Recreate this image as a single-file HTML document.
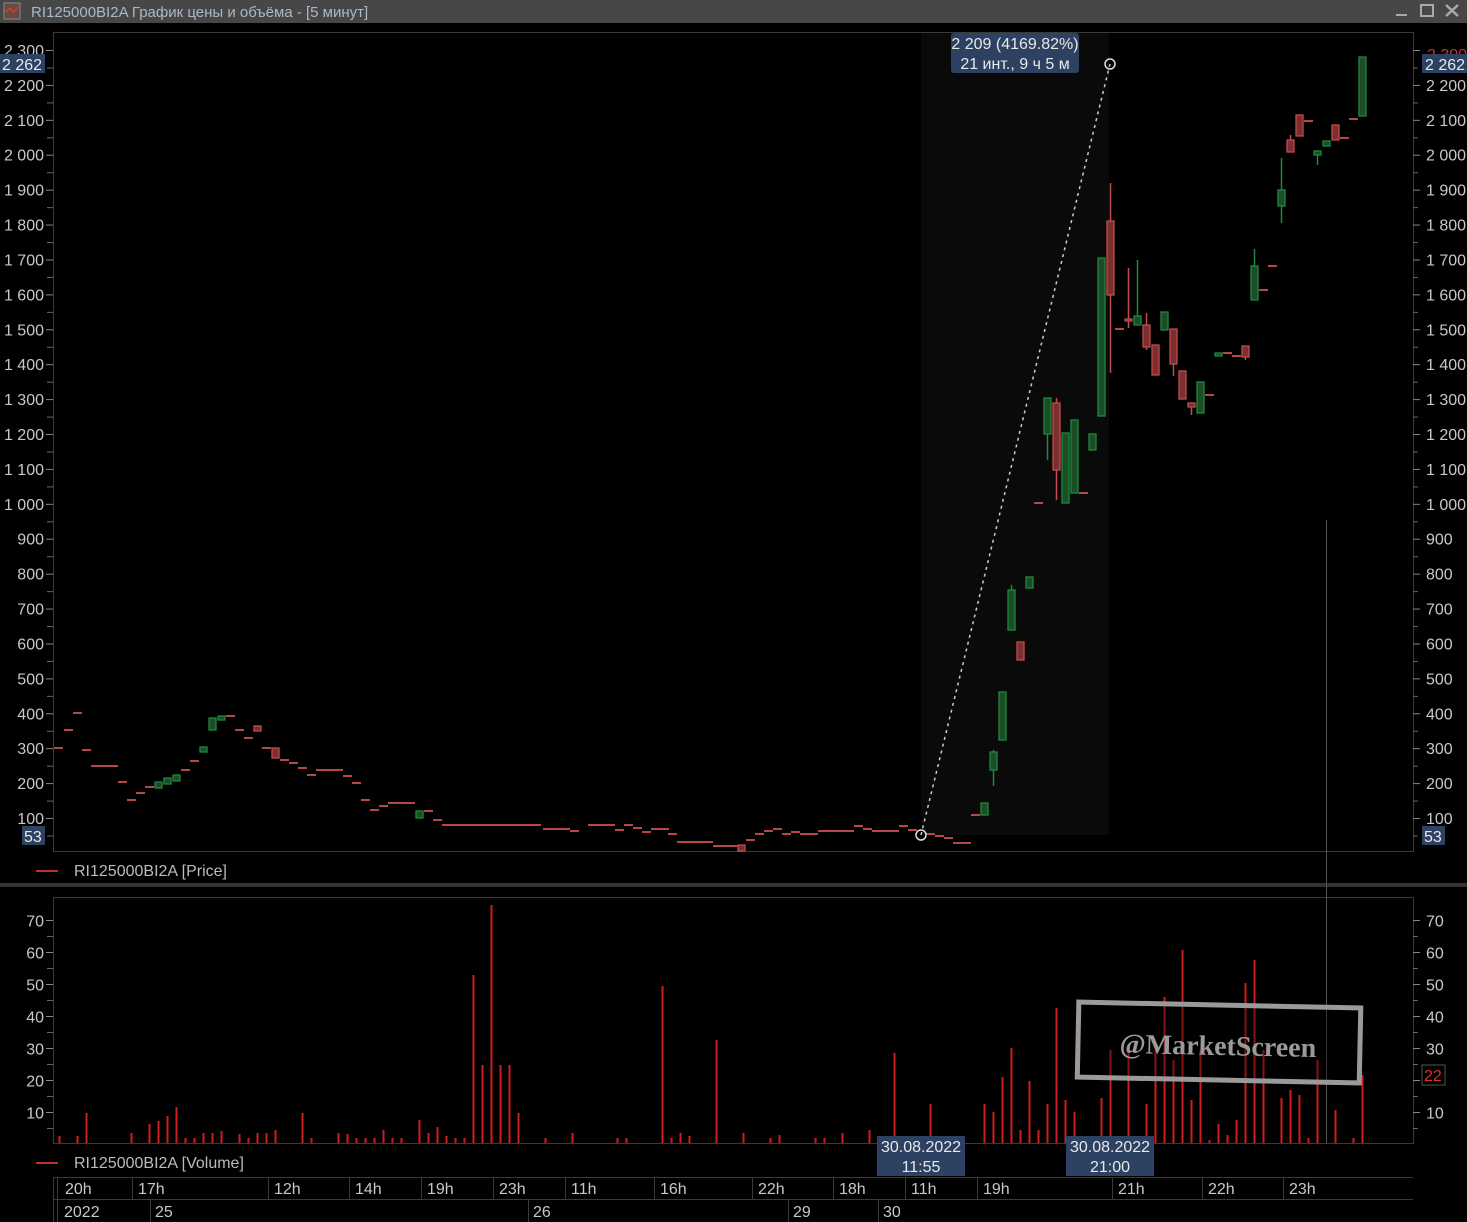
<!DOCTYPE html>
<html><head><meta charset="utf-8">
<style>
html,body{margin:0;padding:0;background:#000;width:1467px;height:1222px;overflow:hidden;font-family:"Liberation Sans","DejaVu Sans",sans-serif}
svg text{font-family:"Liberation Sans","DejaVu Sans",sans-serif}
</style></head><body>
<svg id="s" width="1467" height="1222" xmlns="http://www.w3.org/2000/svg">
<rect x="0" y="0" width="1467" height="1222" fill="#000"/>
<rect x="0" y="0" width="1467" height="23" fill="#474747"/>
<rect x="4" y="3" width="16" height="16" fill="#6a4a40" stroke="#888" stroke-width="1"/>
<polyline points="6,12 10,8 13,12 18,7" fill="none" stroke="#d04030" stroke-width="1.5"/>
<text x="31" y="17" font-size="15" fill="#a9b9c9">RI125000BI2A График цены и объёма - [5 минут]</text>
<rect x="1396" y="14" width="11" height="2" fill="#aaa"/>
<rect x="1421" y="5" width="12" height="11" fill="none" stroke="#aaa" stroke-width="2"/>
<path d="M1446 5 L1458 16 M1458 5 L1446 16" stroke="#aaa" stroke-width="2.5"/>
<rect x="921" y="33" width="188" height="802" fill="#0a0a0a"/>
<rect x="53.5" y="32.5" width="1360" height="819" fill="none" stroke="#3a3a3a"/>
<g id="pl" font-size="16" fill="#c8c8c8"></g>
<g id="candles"></g>
<line x1="921" y1="835" x2="1110" y2="64" stroke="#ccc" stroke-width="1.5" stroke-dasharray="3,4"/>
<circle cx="921" cy="835" r="5" fill="none" stroke="#ddd" stroke-width="1.5"/>
<circle cx="1110" cy="64" r="5" fill="none" stroke="#ddd" stroke-width="1.5"/>
<rect x="951" y="33" width="128" height="40" rx="3" fill="#2d4262"/>
<text x="1015" y="49" font-size="16" fill="#e8e8e8" text-anchor="middle">2 209 (4169.82%)</text>
<text x="1015" y="69" font-size="16" fill="#e8e8e8" text-anchor="middle">21 инт., 9 ч 5 м</text>
<rect x="0" y="54" width="45" height="19" fill="#2d4262"/>
<text x="2" y="70" font-size="16" fill="#e8e8e8">2 262</text>
<rect x="22" y="826" width="23" height="19" fill="#2d4262"/>
<text x="24" y="842" font-size="16" fill="#e8e8e8">53</text>
<text x="1427" y="60" font-size="16" fill="#d03030">2 300</text>
<rect x="1422" y="54" width="45" height="19" fill="#2d4262"/>
<text x="1425" y="70" font-size="16" fill="#e8e8e8">2 262</text>
<rect x="1422" y="826" width="23" height="19" fill="#2d4262"/>
<text x="1424" y="842" font-size="16" fill="#e8e8e8">53</text>
<line x1="36" y1="871" x2="58" y2="871" stroke="#c03030" stroke-width="2"/>
<text x="74" y="876" font-size="16" fill="#bbb">RI125000BI2A [Price]</text>
<rect x="0" y="883" width="1467" height="4" fill="#333"/>
<rect x="53.5" y="897.5" width="1360" height="246" fill="none" stroke="#3a3a3a"/>
<g id="vl" font-size="16" fill="#c8c8c8"></g>
<g id="vols"></g>
<line x1="1326.5" y1="520" x2="1326.5" y2="1143" stroke="#555" stroke-width="1"/>
<rect x="1422" y="1065" width="23" height="20" fill="#000" stroke="#555"/>
<text x="1424" y="1081" font-size="16" fill="#e03030">22</text>
<g transform="rotate(1.2 1218 1044)">
<rect x="1078" y="1005" width="282" height="75" fill="rgba(0,0,0,0.35)" stroke="#9a9a9a" stroke-width="5"/>
<text x="1218" y="1055" font-size="28" font-weight="bold" fill="#9a9a9a" text-anchor="middle" style="font-family:'Liberation Serif',serif">@MarketScreen</text>
</g>
<rect x="877" y="1136" width="88" height="40" fill="#2d4262"/>
<text x="921" y="1152" font-size="16" fill="#e8e8e8" text-anchor="middle">30.08.2022</text>
<text x="921" y="1172" font-size="16" fill="#e8e8e8" text-anchor="middle">11:55</text>
<rect x="1066" y="1136" width="88" height="40" fill="#2d4262"/>
<text x="1110" y="1152" font-size="16" fill="#e8e8e8" text-anchor="middle">30.08.2022</text>
<text x="1110" y="1172" font-size="16" fill="#e8e8e8" text-anchor="middle">21:00</text>
<line x1="36" y1="1163" x2="58" y2="1163" stroke="#c03030" stroke-width="2"/>
<text x="74" y="1168" font-size="16" fill="#bbb">RI125000BI2A [Volume]</text>
<g stroke="#3a3a3a" fill="none">
<line x1="53" y1="1177.5" x2="1413" y2="1177.5"/>
<line x1="53" y1="1199.5" x2="1413" y2="1199.5"/>
<line x1="53.5" y1="1177" x2="53.5" y2="1222"/>
<line x1="57.5" y1="1177" x2="57.5" y2="1222"/>
</g>
<g id="tx" font-size="16" fill="#c8c8c8"></g>
</svg>
<script>
var NS="http://www.w3.org/2000/svg";
function el(p,t,a,txt){var e=document.createElementNS(NS,t);for(var k in a)e.setAttribute(k,a[k]);if(txt!=null)e.textContent=txt;document.getElementById(p).appendChild(e);return e;}
var pv=[2300,2200,2100,2000,1900,1800,1700,1600,1500,1400,1300,1200,1100,1000,900,800,700,600,500,400,300,200,100];
function py(p){return 818-(p-100)*0.34909;}
pv.forEach(function(p){var y=py(p);var s=p>=1000?(Math.floor(p/1000)+" "+String(p%1000).padStart(3,"0")):String(p);
 el("pl","text",{x:44,y:y+6,"text-anchor":"end"},s);
 if(p!=2300)el("pl","text",{x:1426,y:y+6},s);
 el("pl","line",{x1:46,y1:y+.5,x2:53,y2:y+.5,stroke:"#888"});
 el("pl","line",{x1:1413,y1:y+.5,x2:1420,y2:y+.5,stroke:"#888"});
 el("pl","line",{x1:47,y1:y+17.5+.5,x2:53,y2:y+17.5+.5,stroke:"#666"});
 el("pl","line",{x1:1413,y1:y+17.5+.5,x2:1418,y2:y+17.5+.5,stroke:"#666"});
});
[70,60,50,40,30,20,10].forEach(function(v){var y=1144-v*3.2+0.5;
 el("vl","text",{x:44,y:y+6,"text-anchor":"end"},String(v));
 if(v!=20)el("vl","text",{x:1426,y:y+6},String(v));
 el("vl","line",{x1:46,y1:y,x2:53,y2:y,stroke:"#888"});
 el("vl","line",{x1:1413,y1:y,x2:1420,y2:y,stroke:"#888"});
 el("vl","line",{x1:47,y1:y+16,x2:53,y2:y+16,stroke:"#666"});
 el("vl","line",{x1:1413,y1:y+16,x2:1418,y2:y+16,stroke:"#666"});
});
var D=[[58,748],[68,730],[77,713],[86,750],[95,766],[104,766],[113,766],[122,782],[131,800],[140,793],[149,787],[185,770],[194,761],[230,716],[239,730],[248,738],[266,748],[284,760],[293,763],[302,768],[311,775],[320,770],[329,770],[338,770],[347,776],[356,783],[365,800],[374,810],[383,806],[392,803],[401,803],[410,803],[428,811],[437,820]];
for(var x=446;x<=538;x+=9)D.push([x,825]);
D=D.concat([[547,829],[556,829],[565,829],[574,831],[592,825],[601,825],[610,825],[619,830],[628,825],[637,828],[646,832],[655,829],[664,829],[672,834],[681,842],[690,842],[699,842],[708,842],[717,846],[726,846],[735,846],[750,840],[759,834],[768,831],[777,829],[786,834],[795,832],[804,834],[813,834],[822,831],[831,831],[840,831],[849,831],[858,826],[867,829],[876,831],[885,831],[894,831],[903,826],[912,830],[930,834],[939,836],[948,838],[957,843],[966,843],[975,815],[1038,503],[1083,493],[1119,329],[1209,395],[1227,353],[1236,356],[1263,290],[1272,266],[1308,121],[1344,138],[1353,119]]);
D.forEach(function(d){el("candles","rect",{x:d[0]-4,y:d[1]-1,width:9,height:2,fill:"#b84848"});});
var C=[[158,782,788,"g"],[167,778,784,"g"],[176,775,781,"g"],[203,747,752,"g"],[212,718,730,"g"],[221,716,720,"g"],[257,726,731,"r"],[275,748,758,"r"],[419,811,818,"g"],[741,845,851,"r"],
[984,803,815,"g"],[993,752,770,"g",750,786],[1002,692,740,"g"],[1011,590,630,"g",585,630],[1020,642,660,"r"],[1029,577,588,"g"],[1047,398,434,"g",398,460],[1056,403,470,"r",398,500],[1065,433,503,"g"],[1074,420,493,"g"],[1092,434,450,"g"],[1101,258,416,"g"],[1110,221,295,"r",183,373],[1128,319,321,"r",268,328],[1137,316,325,"g",260,325],[1146,325,347,"r",313,350],[1155,345,375,"r"],[1164,312,330,"g"],[1173,329,364,"r",329,376],[1182,371,399,"r"],[1191,403,407,"r",403,415],[1200,382,413,"g"],[1218,353,356,"g"],[1245,346,357,"r",346,360],[1254,266,300,"g",249,300],[1281,190,206,"g",158,223],[1290,140,152,"r",135,152],[1299,115,136,"r"],[1317,151,155,"g",151,165],[1326,141,146,"g"],[1335,125,140,"r"],[1362,57,116,"g"]];
C.forEach(function(c){var g=c[3]=="g";var st=g?"#1d8a3c":"#c04c4c",fi=g?"#1c4d27":"#7d2e2e";
 if(c[4]!=null)el("candles","line",{x1:c[0]+.5,y1:c[4],x2:c[0]+.5,y2:c[5],stroke:st,"stroke-width":1.5});
 el("candles","rect",{x:c[0]-3,y:c[1],width:7,height:Math.max(2,c[2]-c[1]),fill:fi,stroke:st,"stroke-width":1.3});});
var V=[[59,1136],[77,1136],[86,1113],[131,1133],[149,1124],[158,1121],[167,1116],[176,1107],[185,1138],[194,1138],[203,1133],[212,1133],[221,1131],[239,1134],[248,1138],[257,1133],[266,1133],[275,1130],[302,1113],[311,1138],[338,1133],[347,1134],[356,1138],[365,1138],[374,1138],[383,1130],[392,1138],[401,1138],[419,1120],[428,1133],[437,1127],[446,1136],[455,1138],[464,1138],[473,975],[482,1065],[491,905],[500,1065],[509,1065],[518,1113],[545,1138],[572,1133],[617,1138],[626,1138],[662,986],[671,1138],[680,1133],[689,1136],[716,1040],[743,1133],[770,1138],[779,1135],[815,1138],[824,1138],[842,1133],[869,1130],[894,1053],[930,1104],[984,1104],[993,1112],[1002,1077],[1011,1048],[1020,1130],[1029,1081],[1038,1130],[1047,1104],[1056,1008],[1065,1100],[1074,1112],[1101,1098],[1110,1050],[1119,1140],[1128,1050],[1146,1104],[1155,1050],[1164,997],[1173,1060],[1182,950],[1191,1100],[1200,1050],[1209,1140],[1218,1124],[1227,1135],[1236,1120],[1245,983],[1254,960],[1263,1050],[1281,1098],[1290,1090],[1299,1095],[1308,1138],[1317,1060],[1335,1110],[1353,1138],[1362,1075]];
V.forEach(function(v){el("vols","rect",{x:v[0]-0.5,y:v[1],width:2,height:1143-v[1],fill:"#d01c1c"});});
var T=[[62,"20h"],[135,"17h"],[271,"12h"],[352,"14h"],[424,"19h"],[496,"23h"],[568,"11h"],[657,"16h"],[755,"22h"],[836,"18h"],[908,"11h"],[980,"19h"],[1115,"21h"],[1205,"22h"],[1286,"23h"]];
T.forEach(function(t,i){el("tx","text",{x:t[0]+3,y:1194},t[1]);if(i>0)el("tx","line",{x1:t[0]-2.5,y1:1177,x2:t[0]-2.5,y2:1199,stroke:"#3a3a3a"});});
var T2=[[62,"2022"],[153,"25"],[531,"26"],[791,"29"],[881,"30"]];
T2.forEach(function(t,i){el("tx","text",{x:t[0]+2,y:1217},t[1]);if(i>0)el("tx","line",{x1:t[0]-2.5,y1:1200,x2:t[0]-2.5,y2:1222,stroke:"#3a3a3a"});});
</script>
</body></html>
